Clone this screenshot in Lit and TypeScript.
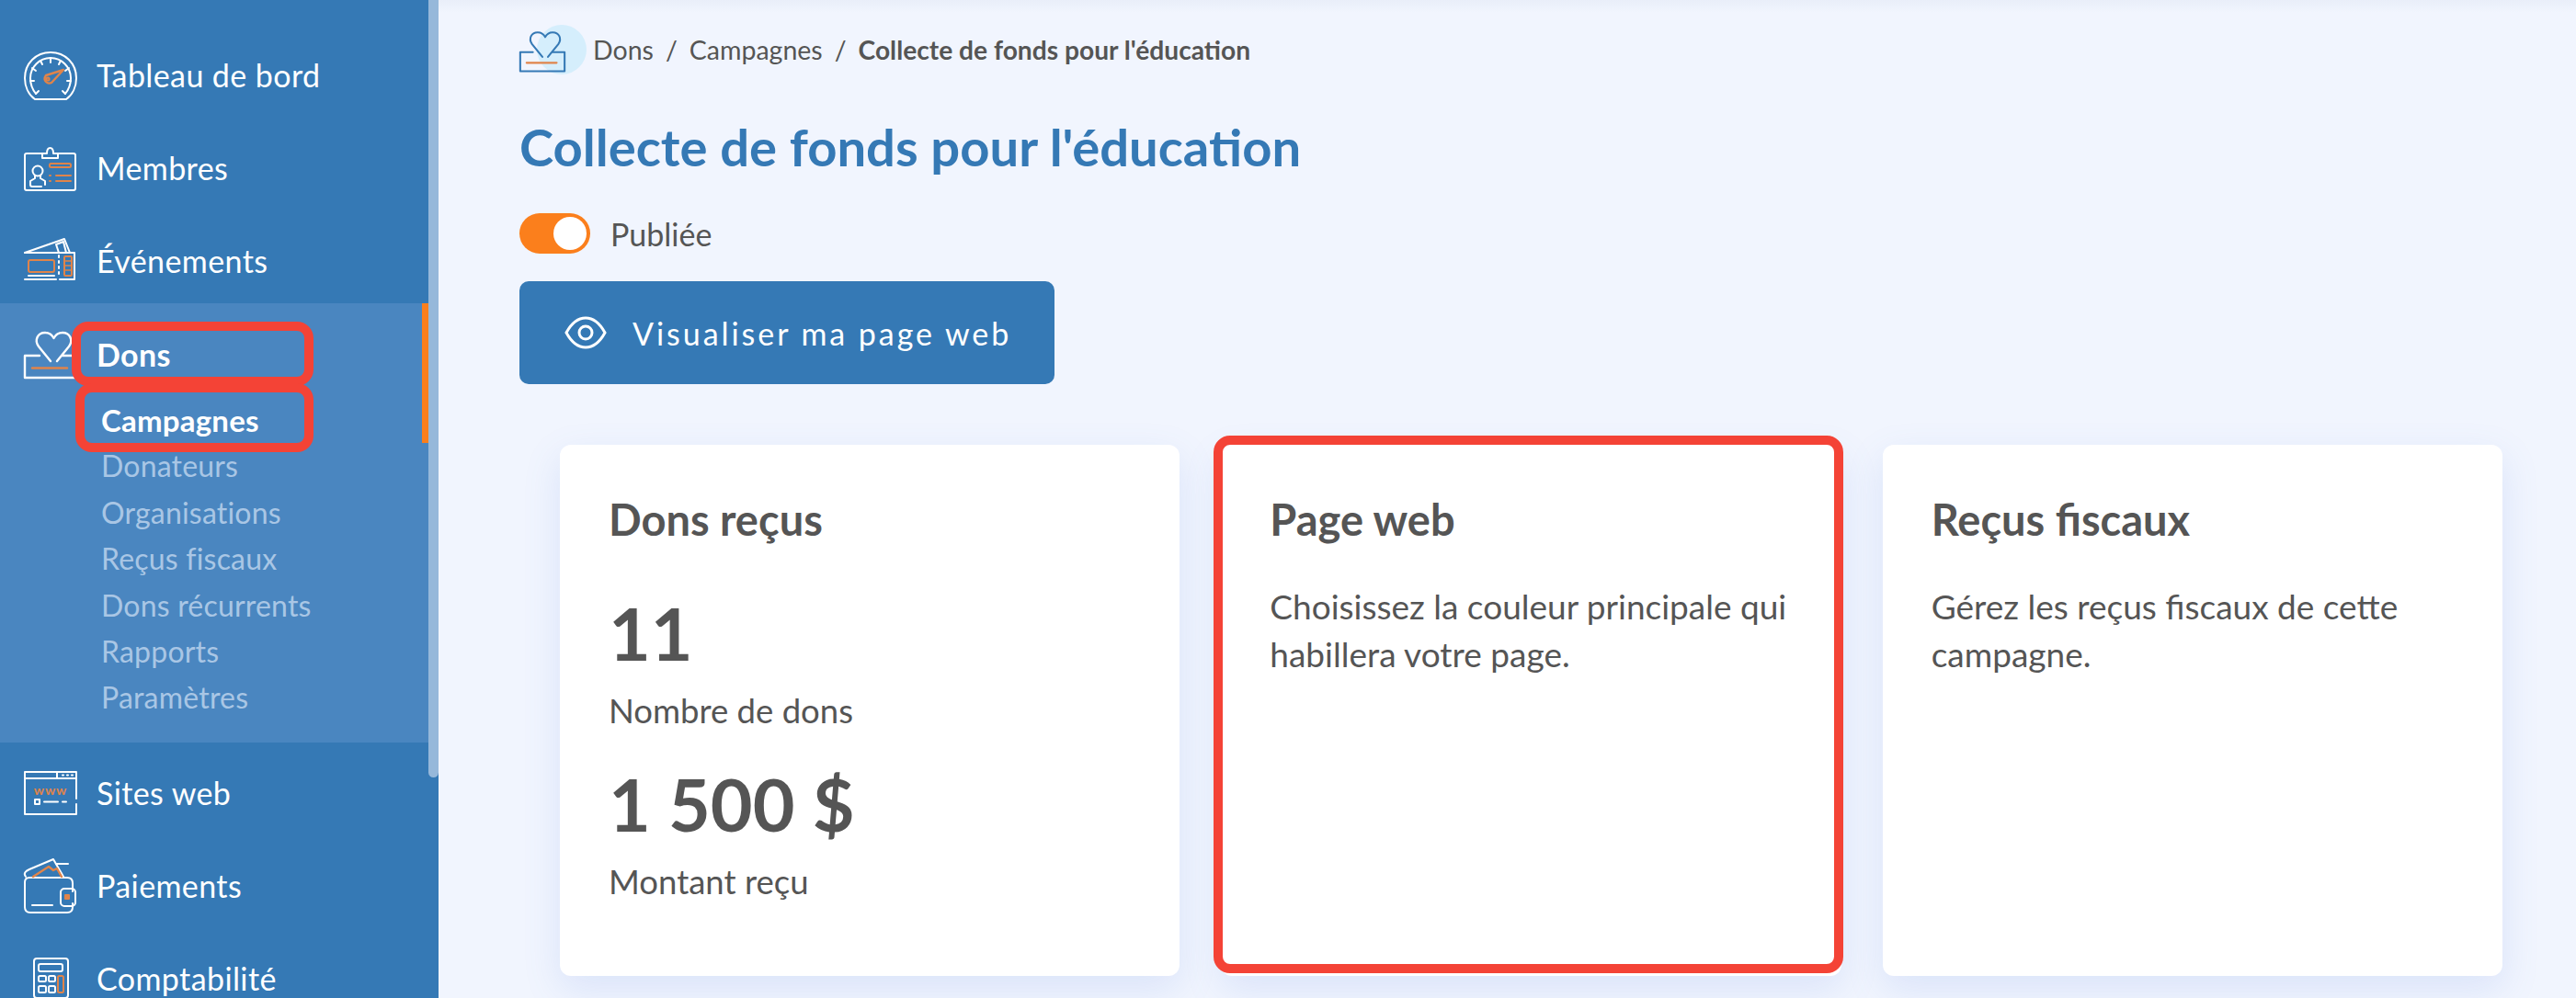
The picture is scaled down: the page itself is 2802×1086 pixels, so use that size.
import {LitElement, html, css, svg} from "lit";
import {customElement} from "lit/decorators.js";

const ORANGE = "#e0844a";

const heartIcon = (line: string, accent: string) => svg`
  <g fill="none" stroke=${line} stroke-width="2.4" stroke-linejoin="round" stroke-linecap="round">
    <path d="M29 37 L16 21 C11 14 15 6 23 6 C28 6 31 9 32.5 12 C34 9 37 6 42 6 C50 6 54 14 49 21 L36 37"/>
    <path d="M17 31 H1 V55 H57 V31 H42"/>
    <path d="M9 44.5 H47" stroke=${accent}/>
  </g>`;

const icons: Record<string, unknown> = {
  gauge: svg`
    <g fill="none" stroke="#fff" stroke-width="2" stroke-linecap="round" stroke-linejoin="round">
      <path d="M12 56 C5 51 1 42 1 33 C1 17 13 5 29 5 C45 5 57 17 57 33 C57 42 53 51 46 56 Z"/>
      <path d="M13 50 C9 45 7 40 7 33 C7 21 17 11 29 11 C41 11 51 21 51 33 C51 40 49 45 45 50"/>
      <path d="M29 11 V16 M18 14 L20 18 M9 22 L13 25 M7 36 H11 M13 50 L16 47 M40 14 L38 18 M49 22 L45 25 M51 36 H47 M45 50 L42 47"/>
      <path d="M24 30 L43 24 L30 38 C26 40 20 36 24 30 Z" stroke=${ORANGE} stroke-width="2.4"/>
      <circle cx="26" cy="34" r="1.6" stroke=${ORANGE}/>
    </g>`,
  badge: svg`
    <g fill="none" stroke="#fff" stroke-width="2" stroke-linecap="round" stroke-linejoin="round">
      <path d="M20 14 H3 Q1 14 1 16 V52 Q1 54 3 54 H54 Q56 54 56 52 V16 Q56 14 54 14 H37"/>
      <path d="M20 19 V14 H25 C25 6 32 6 32 14 H37 V19 Z"/>
      <circle cx="15" cy="33" r="5.5"/>
      <path d="M12 38 V41 L7 44 V48 Q7 50 9 50 H19 M18 38 V41 L23 44 V48"/>
      <rect x="28" y="25" width="23" height="4" rx="1.5" stroke=${ORANGE}/>
      <path d="M35 38 H51 M35 44 H51 M28 38 H29 M28 44 H29" stroke=${ORANGE}/>
    </g>`,
  ticket: svg`
    <g fill="none" stroke="#fff" stroke-width="2" stroke-linecap="round" stroke-linejoin="round">
      <path d="M1 21 H55 V50 H39 M35 50 H1 Z"/>
      <path d="M1 21 L44 6 L50 21"/>
      <path d="M38 21 L35 12 L43 9 L46 21"/>
      <path d="M38 24 V26 M38 30 V32 M38 36 V38 M38 42 V44"/>
      <rect x="5" y="29" width="28" height="13" rx="2" stroke=${ORANGE}/>
      <rect x="44" y="25" width="8" height="21" rx="1" stroke=${ORANGE}/>
      <path d="M44 30 H52 M44 35 H52 M44 40 H52" stroke=${ORANGE} stroke-width="1.4"/>
      <path d="M5 46 H33" />
    </g>`,
  heart: heartIcon("#fff", ORANGE),
  web: svg`
    <g fill="none" stroke="#fff" stroke-width="2" stroke-linecap="round" stroke-linejoin="round">
      <path d="M57 42 V53 H1 V7 H57 V36"/>
      <path d="M1 14 H57 M36 7 V14"/>
      <path d="M42 10.5 H43 M47 10.5 H48 M52 10.5 H53"/>
      <rect x="12" y="37" width="5" height="5"/>
      <path d="M22 39.5 H37 M42 39.5 H46"/>
    </g>
    <text x="29" y="32" text-anchor="middle" font-family="Lato, sans-serif" font-size="14" font-weight="700" letter-spacing="1" fill=${ORANGE}>www</text>`,
  wallet: svg`
    <g fill="none" stroke="#fff" stroke-width="2" stroke-linecap="round" stroke-linejoin="round">
      <path d="M1 26 V53 Q1 59 7 59 H47 Q53 59 53 53 V49 M53 36 V27 Q53 21 47 21 H6 Q1 21 1 26"/>
      <path d="M2 20 C-1 16 2 14 6 12 L32 1 L43 20"/>
      <path d="M35 6 H48"/>
      <rect x="40" y="33" width="16" height="19" rx="4"/>
      <rect x="45" y="40" width="4" height="4" fill=${ORANGE} stroke=${ORANGE}/>
      <path d="M9 51 H31"/>
      <path d="M10 20 L27 9 L32 13 L36 11 L41 20" stroke=${ORANGE} stroke-width="2.4"/>
    </g>`,
  calc: svg`
    <g fill="none" stroke="#fff" stroke-width="2" stroke-linejoin="round">
      <rect x="11" y="8" width="37" height="43" rx="3"/>
      <rect x="16" y="14" width="26" height="8" rx="2"/>
      <rect x="16" y="27" width="8" height="6" rx="1.5"/>
      <rect x="27" y="27" width="7" height="6" rx="1.5"/>
      <rect x="16" y="38" width="8" height="7" rx="1.5"/>
      <rect x="27" y="38" width="7" height="7" rx="1.5"/>
      <rect x="37" y="27" width="6" height="18" rx="1.5" stroke=${ORANGE}/>
    </g>`,
};

const SUB_ITEMS = ["Campagnes", "Donateurs", "Organisations", "Reçus fiscaux", "Dons récurrents", "Rapports", "Paramètres"];

@customElement("app-root")
export class AppRoot extends LitElement {
  static styles = css`
    :host {
      display: flex;
      height: 1086px;
      overflow: hidden;
      font-family: Lato, "Noto Sans", sans-serif;
      color: #555;
      background: #f1f5fe;
    }
    .sidebar {
      flex: none;
      display: flex;
      width: 477px;
      background: #3579b5;
      overflow: hidden;
    }
    .nav {
      width: 466px;
      padding-top: 34px;
      display: flex;
      flex-direction: column;
      gap: 7px;
    }
    .scroll {
      width: 11px;
      height: 846px;
      background: #96b8da;
      border-radius: 0 0 6px 6px;
    }
    .row {
      position: relative;
      flex: none;
      height: 94px;
      display: flex;
      align-items: center;
      font-size: 34px;
      letter-spacing: 0.4px;
      color: #fff;
    }
    .row svg {
      flex: none;
      width: 58px;
      height: 58px;
      margin: 0 21px 0 26px;
      overflow: visible;
    }
    .active {
      position: relative;
      flex: none;
      height: 478px;
      margin-top: -7px;
      padding-top: 8px;
      box-sizing: border-box;
      background: #4a86c0;
    }
    .active .row {
      font-weight: 700;
    }
    .marker {
      position: absolute;
      top: 0;
      right: 0;
      width: 7px;
      height: 152px;
      background: #fb7f1c;
    }
    .sub {
      position: relative;
      height: 50.4px;
      line-height: 50.4px;
      padding-left: 110px;
      font-size: 32px;
      letter-spacing: 0.2px;
      color: #a9c6e5;
    }
    .sub.current {
      color: #fff;
      font-weight: 700;
      font-size: 33px;
    }
    .note {
      position: absolute;
      box-sizing: border-box;
      border: 10px solid #f44336;
      border-radius: 18px;
      pointer-events: none;
    }
    .note-dons {
      top: 12px;
      left: 78px;
      width: 263px;
      height: 70px;
    }
    .note-camp {
      top: -15px;
      left: 82px;
      width: 259px;
      height: 75px;
    }
    .note-card {
      top: -10px;
      left: -8px;
      right: -2px;
      bottom: 3px;
    }
    .main {
      flex: 1;
      min-width: 0;
      padding: 27px 80px 0 88px;
      background: linear-gradient(#e9eef9 0, #f1f5fe 14px);
    }
    .crumbs {
      display: flex;
      align-items: center;
      height: 54px;
      font-size: 28.5px;
    }
    .crumb-icon {
      position: relative;
      flex: none;
      width: 80px;
      height: 54px;
    }
    .halo {
      position: absolute;
      left: 19px;
      top: 0;
      width: 54px;
      height: 54px;
      border-radius: 50%;
      background: #d5eefc;
    }
    .crumb-icon svg {
      position: absolute;
      left: 0;
      top: 3px;
      width: 50px;
      height: 50px;
      overflow: visible;
    }
    .sep {
      margin: 0 13px;
    }
    .crumbs b {
      font-weight: 700;
      font-size: 28.2px;
    }
    h1 {
      margin: 46px 0 0;
      height: 66px;
      line-height: 66px;
      font-size: 56.2px;
      font-weight: 700;
      color: #3579b5;
    }
    .publish {
      display: flex;
      align-items: center;
      gap: 22px;
      margin-top: 39px;
      height: 44px;
      font-size: 34px;
    }
    .toggle {
      display: flex;
      justify-content: flex-end;
      align-items: center;
      box-sizing: border-box;
      width: 77px;
      height: 44px;
      padding-right: 4px;
      border-radius: 22px;
      background: #fb7f1c;
    }
    .toggle i {
      width: 36px;
      height: 36px;
      border-radius: 50%;
      background: #fff;
    }
    .btn {
      display: flex;
      align-items: center;
      gap: 28px;
      box-sizing: border-box;
      width: 582px;
      height: 112px;
      margin-top: 30px;
      padding-left: 49px;
      border-radius: 10px;
      background: #3579b5;
      color: #fff;
      font-size: 34px;
      letter-spacing: 2.95px;
    }
    .btn svg {
      flex: none;
      width: 46px;
      height: 36px;
    }
    .cards {
      display: grid;
      grid-template-columns: repeat(3, 1fr);
      gap: 45px;
      height: 578px;
      margin: 66px 0 0 44px;
    }
    .card {
      position: relative;
      padding: 53px 40px 0 53px;
      border-radius: 12px;
      background: #fff;
      box-shadow: 0 14px 40px rgba(90, 130, 220, 0.15);
    }
    h2 {
      margin: 0;
      height: 56px;
      line-height: 56px;
      font-size: 47px;
      font-weight: 700;
    }
    .num {
      height: 90px;
      line-height: 90px;
      font-size: 79px;
      font-weight: 700;
    }
    .first {
      margin-top: 51px;
    }
    .second {
      margin-top: 32px;
    }
    .label {
      height: 50px;
      line-height: 50px;
      margin-top: 14px;
      font-size: 36.5px;
    }
    p {
      margin: 41px 0 0;
      font-size: 37px;
      line-height: 52px;
    }
  `;

  renderRow(label: string, icon: string) {
    return html`
      <div class="row">
        <svg viewBox="0 0 58 58">${icons[icon]}</svg>
        <span>${label}</span>
        ${icon === "heart" ? html`<div class="note note-dons"></div>` : ""}
      </div>
    `;
  }

  render() {
    return html`
      <aside class="sidebar">
        <nav class="nav">
          ${this.renderRow("Tableau de bord", "gauge")}
          ${this.renderRow("Membres", "badge")}
          ${this.renderRow("Événements", "ticket")}
          <div class="active">
            <div class="marker"></div>
            ${this.renderRow("Dons", "heart")}
            ${SUB_ITEMS.map(
              (item, i) => html`
                <div class="sub ${i === 0 ? "current" : ""}">
                  ${item}
                  ${i === 0 ? html`<div class="note note-camp"></div>` : ""}
                </div>
              `
            )}
          </div>
          ${this.renderRow("Sites web", "web")}
          ${this.renderRow("Paiements", "wallet")}
          ${this.renderRow("Comptabilité", "calc")}
        </nav>
        <div class="scroll"></div>
      </aside>
      <main class="main">
        <div class="crumbs">
          <div class="crumb-icon">
            <div class="halo"></div>
            <svg viewBox="0 0 58 58">${heartIcon("#3579b5", ORANGE)}</svg>
          </div>
          <span>Dons</span><span class="sep">/</span>
          <span>Campagnes</span><span class="sep">/</span>
          <b>Collecte de fonds pour l'éducation</b>
        </div>
        <h1>Collecte de fonds pour l'éducation</h1>
        <div class="publish">
          <div class="toggle"><i></i></div>
          <span>Publiée</span>
        </div>
        <div class="btn">
          <svg viewBox="0 0 46 36" fill="none" stroke="#fff" stroke-width="3">
            <path d="M2 18 C8 7 15 2 23 2 C31 2 38 7 44 18 C38 29 31 34 23 34 C15 34 8 29 2 18 Z"/>
            <circle cx="23" cy="18" r="7"/>
          </svg>
          <span>Visualiser ma page web</span>
        </div>
        <section class="cards">
          <div class="card">
            <h2>Dons reçus</h2>
            <div class="num first">11</div>
            <div class="label">Nombre de dons</div>
            <div class="num second">1 500 $</div>
            <div class="label">Montant reçu</div>
          </div>
          <div class="card">
            <h2>Page web</h2>
            <p>Choisissez la couleur principale qui habillera votre page.</p>
            <div class="note note-card"></div>
          </div>
          <div class="card">
            <h2>Reçus fiscaux</h2>
            <p>Gérez les reçus fiscaux de cette campagne.</p>
          </div>
        </section>
      </main>
    `;
  }
}
